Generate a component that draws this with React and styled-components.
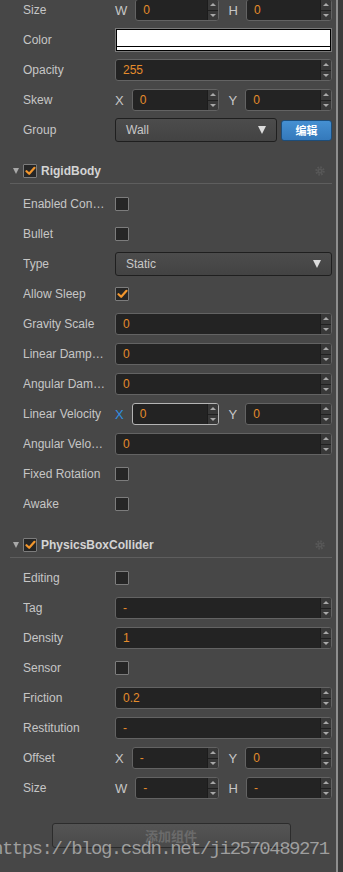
import React from "react";
import styled, { createGlobalStyle } from "styled-components";

const GlobalStyle = createGlobalStyle`
  html, body { margin: 0; padding: 0; background: #474747; overflow: hidden; }
  body { font-family: "Liberation Sans", Arial, sans-serif; }
  * { box-sizing: border-box; }
`;

const Frame = styled.div`
  display: flex;
  height: 872px;
  overflow: hidden;
  position: relative;
`;

const Panel = styled.div`
  flex: 0 0 336px;
  padding: 0 4px 0 10px;
  margin-top: -5px;
`;

const ScrollThumb = styled.div`
  flex: 0 0 2px;
  background: #8e8e8e;
`;

const ScrollTrack = styled.div`
  flex: 1;
  background: #3b3b3b;
`;

const Row = styled.div`
  display: flex;
  align-items: center;
  height: 30px;
  padding-left: 13px;
`;

const Label = styled.div`
  flex: 0 0 92px;
  padding-right: 9px;
  color: #c6c6c6;
  font-size: 12px;
  white-space: nowrap;
  overflow: hidden;
  text-overflow: ellipsis;
`;

const Field = styled.div`
  flex: 1;
  display: flex;
  align-items: center;
  min-width: 0;
`;

const NumBox = styled.div`
  flex: 1;
  display: flex;
  height: 22px;
  border: 1px solid ${(p) => (p.$focused ? "#b4b4b4" : "#636363")};
  border-radius: 3px;
  background: #232323;
  overflow: hidden;
  min-width: 0;
`;

const Value = styled.div`
  flex: 1;
  padding-left: 7px;
  color: #e58c2b;
  font-size: 12px;
  line-height: 20px;
  white-space: nowrap;
`;

const Spin = styled.div`
  flex: 0 0 11px;
  display: flex;
  flex-direction: column;
  background: #393939;
  border-left: 1px solid #1c1c1c;
`;

const SpinHalf = styled.div`
  flex: 1;
  display: flex;
  align-items: center;
  justify-content: center;
  border-top: ${(p) => (p.$down ? "1px solid #202020" : "none")};
`;

const Tri = styled.div`
  width: 0;
  height: 0;
  border-left: 3px solid transparent;
  border-right: 3px solid transparent;
  ${(p) =>
    p.$down
      ? "border-top: 3px solid #a8a8a8;"
      : "border-bottom: 3px solid #a8a8a8;"}
`;

const Pair = styled.div`
  flex: 1;
  display: grid;
  grid-template-columns: 1fr 1fr;
  column-gap: 10px;
`;

const Half = styled.div`
  display: flex;
  align-items: center;
  min-width: 0;
`;

const Axis = styled.span`
  color: ${(p) => (p.$active ? "#2f90e2" : "#c6c6c6")};
  font-size: 13px;
  margin-right: 8px;
`;

const Check = styled.div`
  width: 14px;
  height: 14px;
  border: 1px solid #7c7c7c;
  background: #262626;
  border-radius: 1px;
  display: flex;
  align-items: center;
  justify-content: center;
`;

const ColorBox = styled.div`
  flex: 1;
  height: 24px;
  border: 1px solid #7a7a7a;
  display: flex;
`;

const ColorInner = styled.div`
  flex: 1;
  border: 1px solid #000;
  background: #fff;
  display: flex;
  flex-direction: column;
  justify-content: flex-end;
`;

const AlphaBar = styled.div`
  height: 4px;
  border-top: 1px solid #000;
  background: #fff;
`;

const Select = styled.div`
  flex: 1;
  height: 24px;
  display: flex;
  align-items: center;
  justify-content: space-between;
  padding: 0 10px 0 10px;
  border: 1px solid #1f1f1f;
  border-radius: 3px;
  background: linear-gradient(#4c4c4c, #434343);
  color: #c8c8c8;
  font-size: 12px;
`;

const SelectArrow = styled.span`
  width: 0;
  height: 0;
  border-left: 4.5px solid transparent;
  border-right: 4.5px solid transparent;
  border-top: 8px solid #dcdcdc;
`;

const BlueButton = styled.div`
  flex: 0 0 51px;
  height: 21px;
  margin-left: 4px;
  border: 1px solid #1d4d79;
  border-radius: 3px;
  background: linear-gradient(#4590d2, #3479bb);
  color: #fff;
  font-size: 11px;
  font-weight: bold;
  display: flex;
  align-items: center;
  justify-content: center;
  font-family: "Noto Sans CJK SC", sans-serif;
`;

const Header = styled.div`
  display: flex;
  align-items: center;
  height: 24px;
  margin-top: 14px;
  margin-bottom: 5px;
  padding-left: 3px;
  border-bottom: 1px solid #5e5e5e;
  box-sizing: content-box;
`;

const Caret = styled.span`
  flex: 0 0 10px;
  display: flex;
  align-items: center;
  &::before {
    content: "";
    width: 0;
    height: 0;
    border-left: 3.5px solid transparent;
    border-right: 3.5px solid transparent;
    border-top: 6px solid #a9a9a9;
  }
`;

const Title = styled.span`
  margin-left: 4px;
  color: #d4d4d4;
  font-size: 12px;
  font-weight: bold;
`;

const Gear = styled.span`
  margin-left: auto;
  margin-right: 7px;
  display: flex;
`;

const Footer = styled.div`
  display: flex;
  justify-content: center;
  padding-top: 20px;
`;

const AddButton = styled.div`
  width: 239px;
  height: 25px;
  border: 1px solid #2c2c2c;
  border-radius: 3px;
  background: linear-gradient(#545454, #4a4a4a);
  color: #6b6b6b;
  font-size: 13px;
  font-weight: bold;
  display: flex;
  align-items: center;
  justify-content: center;
  font-family: "Noto Sans CJK SC", sans-serif;
`;

const Watermark = styled.div`
  position: absolute;
  left: -8px;
  top: 838px;
  font-family: "Liberation Mono", monospace;
  font-size: 19px;
  letter-spacing: -1.5px;
  color: rgba(175, 175, 175, 0.85);
  white-space: nowrap;
  pointer-events: none;
`;

const CheckMark = () => (
  <svg width="11" height="10" viewBox="0 0 11 10">
    <path d="M1.5 5.2 L4.2 7.8 L9.5 1.8" fill="none" stroke="#f2962d" strokeWidth="2.2" strokeLinecap="round" strokeLinejoin="round" />
  </svg>
);

const Num = ({ value, focused }) => (
  <NumBox $focused={focused}>
    <Value>{value}</Value>
    <Spin>
      <SpinHalf><Tri /></SpinHalf>
      <SpinHalf $down><Tri $down /></SpinHalf>
    </Spin>
  </NumBox>
);

const Box = ({ checked }) => <Check>{checked && <CheckMark />}</Check>;

const NumRow = ({ label, value }) => (
  <Row>
    <Label>{label}</Label>
    <Field><Num value={value} /></Field>
  </Row>
);

const CheckRow = ({ label, checked }) => (
  <Row>
    <Label>{label}</Label>
    <Field><Box checked={checked} /></Field>
  </Row>
);

const PairRow = ({ label, a, b, focusA }) => (
  <Row>
    <Label>{label}</Label>
    <Pair>
      <Half>
        <Axis $active={focusA}>{a[0]}</Axis>
        <Num value={a[1]} focused={focusA} />
      </Half>
      <Half>
        <Axis>{b[0]}</Axis>
        <Num value={b[1]} />
      </Half>
    </Pair>
  </Row>
);

const GearIcon = () => (
  <svg width="10" height="10" viewBox="0 0 10 10">
    <circle cx="5" cy="5" r="3.6" fill="none" stroke="#575757" strokeWidth="2.2" strokeDasharray="1.6 1.2" />
    <circle cx="5" cy="5" r="2.6" fill="#575757" />
    <circle cx="5" cy="5" r="1" fill="#474747" />
  </svg>
);

const SectionHeader = ({ title }) => (
  <Header>
    <Caret />
    <Box checked />
    <Title>{title}</Title>
    <Gear><GearIcon /></Gear>
  </Header>
);

export default function App() {
  return (
    <Frame>
      <GlobalStyle />
      <Panel>
        <PairRow label="Size" a={["W", "0"]} b={["H", "0"]} />
        <Row>
          <Label>Color</Label>
          <Field>
            <ColorBox>
              <ColorInner><AlphaBar /></ColorInner>
            </ColorBox>
          </Field>
        </Row>
        <NumRow label="Opacity" value="255" />
        <PairRow label="Skew" a={["X", "0"]} b={["Y", "0"]} />
        <Row>
          <Label>Group</Label>
          <Field>
            <Select>Wall<SelectArrow /></Select>
            <BlueButton>编辑</BlueButton>
          </Field>
        </Row>

        <SectionHeader title="RigidBody" />
        <CheckRow label="Enabled Contact Listener" />
        <CheckRow label="Bullet" />
        <Row>
          <Label>Type</Label>
          <Field><Select>Static<SelectArrow /></Select></Field>
        </Row>
        <CheckRow label="Allow Sleep" checked />
        <NumRow label="Gravity Scale" value="0" />
        <NumRow label="Linear Damping" value="0" />
        <NumRow label="Angular Damping" value="0" />
        <PairRow label="Linear Velocity" a={["X", "0"]} b={["Y", "0"]} focusA />
        <NumRow label="Angular Velocity" value="0" />
        <CheckRow label="Fixed Rotation" />
        <CheckRow label="Awake" />

        <SectionHeader title="PhysicsBoxCollider" />
        <CheckRow label="Editing" />
        <NumRow label="Tag" value="-" />
        <NumRow label="Density" value="1" />
        <CheckRow label="Sensor" />
        <NumRow label="Friction" value="0.2" />
        <NumRow label="Restitution" value="-" />
        <PairRow label="Offset" a={["X", "-"]} b={["Y", "0"]} />
        <PairRow label="Size" a={["W", "-"]} b={["H", "-"]} />

        <Footer>
          <AddButton>添加组件</AddButton>
        </Footer>
      </Panel>
      <ScrollThumb />
      <ScrollTrack />
      <Watermark>https://blog.csdn.net/ji2570489271</Watermark>
    </Frame>
  );
}
